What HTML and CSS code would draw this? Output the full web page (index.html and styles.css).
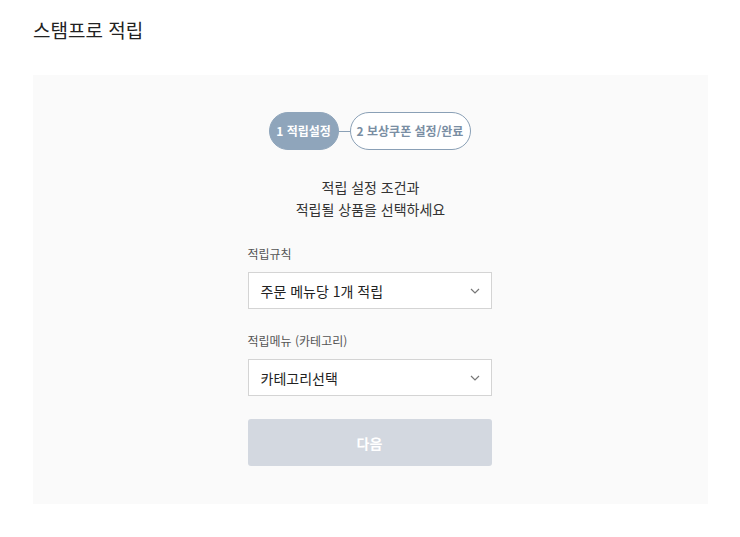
FILE: index.html
```html
<!DOCTYPE html>
<html lang="ko">
<head>
<meta charset="utf-8">
<link rel="stylesheet" href="styles.css">
</head>
<body>
<div class="page">
  <h1 class="title">스탬프로 적립</h1>
  <div class="panel">
    <div class="steps">
      <div class="step active">1 적립설정</div>
      <div class="connector"></div>
      <div class="step">2 보상쿠폰 설정/완료</div>
    </div>
    <p class="desc">적립 설정 조건과<br>적립될 상품을 선택하세요</p>
    <div class="form">
      <div class="field">
        <div class="label">적립규칙</div>
        <div class="select"><span>주문 메뉴당 1개 적립</span>
          <svg class="chev" width="10" height="6" viewBox="0 0 10 6"><path d="M1 1 L5 5 L9 1" fill="none" stroke="#777" stroke-width="1.2"/></svg>
        </div>
      </div>
      <div class="field">
        <div class="label">적립메뉴 (카테고리)</div>
        <div class="select"><span>카테고리선택</span>
          <svg class="chev" width="10" height="6" viewBox="0 0 10 6"><path d="M1 1 L5 5 L9 1" fill="none" stroke="#777" stroke-width="1.2"/></svg>
        </div>
      </div>
      <button class="next">다음</button>
    </div>
  </div>
</div>
</body>
</html>
```
FILE: styles.css
```css
* { box-sizing: border-box; }
body {
  margin: 0;
  background: #fff;
  font-family: "Noto Sans CJK KR", "Noto Sans", sans-serif;
  color: #222;
}
.page { padding: 15px 32px 0 33px; }
.title {
  margin: 0;
  font-size: 19px;
  font-weight: 400;
  line-height: 30px;
  color: #222;
}
.panel {
  margin-top: 30px;
  width: 675px;
  height: 429px;
  background: #fafafa;
  display: flex;
  flex-direction: column;
  align-items: center;
  padding-top: 37px;
}
.steps { display: flex; align-items: center; margin-left: -2px; }
.step {
  height: 38px;
  border-radius: 19px;
  border: 1px solid #8aa0b6;
  background: #fff;
  color: #7a8ea3;
  font-size: 12px;
  font-weight: 700;
  line-height: 36px;
  text-align: center;
  padding: 0;
  width: 121px;
}
.step.active {
  background: #8fa5bb;
  color: #fff;
  border-color: #8fa5bb;
  width: 70px;
}
.connector { width: 11px; height: 1px; background: #8aa0b6; }
.desc {
  margin: 26px 0 0;
  text-align: center;
  font-size: 14px;
  line-height: 22px;
  color: #333;
}
.form { width: 244px; margin-top: 25px; margin-left: -2px; }
.field { margin-bottom: 23px; }
.label {
  font-size: 12px;
  color: #555;
  line-height: 18px;
  margin-bottom: 9px;
}
.select {
  height: 37px;
  background: #fff;
  border: 1px solid #d4d4d4;
  display: flex;
  align-items: center;
  justify-content: space-between;
  padding: 0 11px 0 12px;
  font-size: 14px;
  color: #222;
}
.chev { display: block; }
.next {
  display: block;
  width: 244px;
  height: 47px;
  border: 0;
  border-radius: 3px;
  background: #d3d8e0;
  color: #fff;
  font-family: inherit;
  font-size: 14px;
  font-weight: 700;
}
```
